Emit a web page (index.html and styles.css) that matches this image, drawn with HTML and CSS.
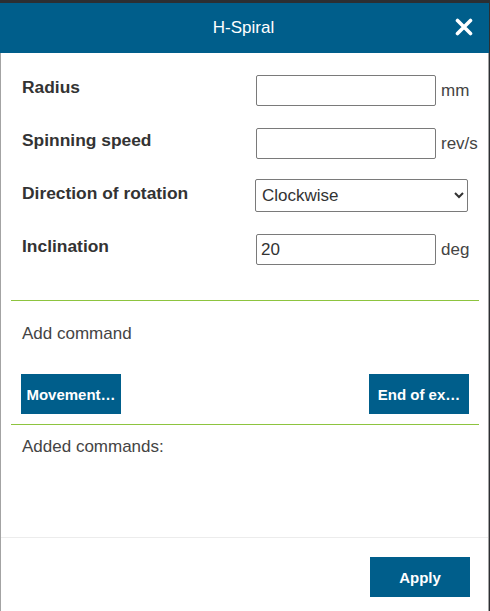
FILE: index.html
```html
<!DOCTYPE html>
<html>
<head>
<meta charset="utf-8">
<link rel="stylesheet" href="styles.css">
</head>
<body>
<div class="dialog">
  <div class="header">
    <span class="title">H-Spiral</span>
    <button class="close" aria-label="Close">
      <svg width="18" height="18" viewBox="0 0 18 18"><path d="M2.5 2.5 L15.5 15.5 M15.5 2.5 L2.5 15.5" stroke="#fff" stroke-width="3.6" stroke-linecap="round"/></svg>
    </button>
  </div>
  <div class="body">
    <div class="form">
      <label class="label">Radius</label>
      <div class="control"><input class="input" type="text"><span class="unit">mm</span></div>
      <label class="label">Spinning speed</label>
      <div class="control"><input class="input" type="text"><span class="unit">rev/s</span></div>
      <label class="label">Direction of rotation</label>
      <div class="control"><select class="select"><option>Clockwise</option></select></div>
      <label class="label">Inclination</label>
      <div class="control"><input class="input" type="text" value="20"><span class="unit">deg</span></div>
    </div>
    <div class="divider"></div>
    <div class="section">
      <div class="section-title">Add command</div>
      <div class="buttons">
        <button class="btn">Movement…</button>
        <button class="btn">End of ex…</button>
      </div>
    </div>
    <div class="divider"></div>
    <div class="section added">
      <div class="section-title">Added commands:</div>
    </div>
  </div>
  <div class="footer">
    <button class="btn apply">Apply</button>
  </div>
</div>
</body>
</html>
```
FILE: styles.css
```css
html, body {
  margin: 0;
  padding: 0;
}
body {
  background: #2c2f33;
  font-family: "Liberation Sans", Arial, sans-serif;
  color: #333;
  height: 611px;
  overflow: hidden;
}
.dialog {
  margin-top: 3px;
  width: 487px;
  height: 608px;
  background: #fff;
  border-left: 1px solid #a3a3a3;
  border-right: 1px solid #a3a3a3;
  display: flex;
  flex-direction: column;
}
.header {
  height: 50px;
  flex: none;
  background: #005e8b;
  margin-left: -1px;
  margin-right: -1px;
  display: flex;
  align-items: center;
  justify-content: center;
  position: relative;
}
.title {
  color: #fff;
  font-size: 17px;
  line-height: 20px;
  padding-right: 2px;
}
.close {
  position: absolute;
  right: 16px;
  top: 15px;
  background: none;
  border: 0;
  padding: 0;
  width: 18px;
  height: 18px;
  display: flex;
}
.body {
  flex: 1;
  padding: 0 9px 0 10px;
  display: flex;
  flex-direction: column;
}
.form {
  padding: 22px 0 35px 11px;
  display: grid;
  grid-template-columns: 234px 1fr;
  grid-auto-rows: 31px;
  row-gap: 22px;
  align-items: start;
  flex: none;
}
.divider {
  height: 0;
  flex: none;
  border-top: 1px solid #8dc43f;
}
.label {
  font-weight: bold;
  font-size: 17.4px;
  line-height: 20px;
  margin-top: 2px;
}
.control {
  display: flex;
  align-items: center;
  height: 31px;
}
.input {
  box-sizing: border-box;
  width: 180px;
  height: 31px;
  border: 1px solid #7a7a7a;
  border-radius: 2px;
  padding: 0 4px;
  font-family: "Liberation Sans", Arial, sans-serif;
  font-size: 17px;
  color: #333;
  margin: 0;
}
.unit {
  margin-left: 5px;
  font-size: 17px;
  line-height: 20px;
  color: #444;
}
.select {
  box-sizing: border-box;
  width: 213px;
  height: 33px;
  margin: -2px 0 0 -1px;
  border: 1px solid #7a7a7a;
  border-radius: 2px;
  padding: 0 2px;
  font-family: "Liberation Sans", Arial, sans-serif;
  font-size: 17px;
  color: #333;
  background: #fff;
}
.section {
  padding: 23px 10px 0 11px;
}
.section-title {
  font-size: 17px;
  line-height: 20px;
  color: #444;
}
.buttons {
  display: flex;
  justify-content: space-between;
  margin-top: 30px;
  margin-left: -1px;
  padding-bottom: 10px;
}
.btn {
  width: 100px;
  height: 40px;
  background: #005e8b;
  color: #fff;
  border: 0;
  font-family: "Liberation Sans", Arial, sans-serif;
  font-weight: bold;
  font-size: 15px;
  padding: 0 4px;
  white-space: nowrap;
  overflow: hidden;
  text-overflow: ellipsis;
}
.added {
  padding-top: 12px;
}
.footer {
  height: 74px;
  flex: none;
  border-top: 1px solid #ececec;
  display: flex;
  justify-content: flex-end;
  align-items: flex-start;
  padding: 19px 18px 0 0;
  box-sizing: border-box;
}
.apply {
  font-size: 15px;
}
```
